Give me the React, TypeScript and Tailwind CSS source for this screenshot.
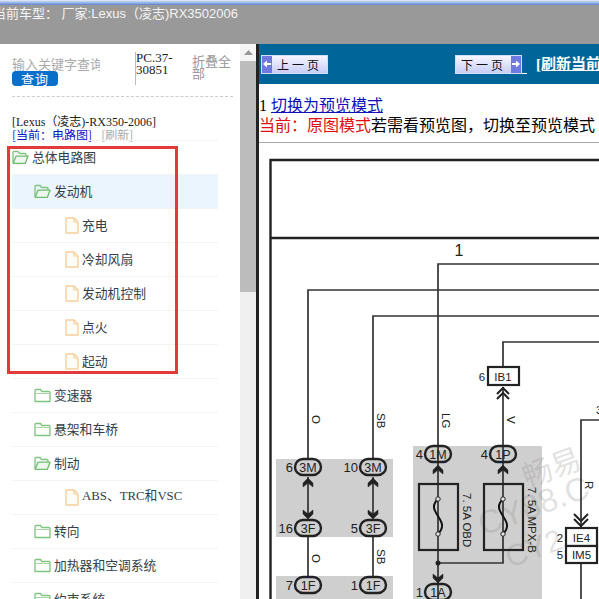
const cjk = "font-['Noto_Sans_CJK_SC',sans-serif]";

function FolderOpen() {
  return (
    <svg width="17" height="15" viewBox="0 0 17 15" fill="none" className="shrink-0">
      <path d="M1 13V2.5C1 1.8 1.4 1.5 2 1.5H6L7.5 3.5H13C13.6 3.5 14 3.9 14 4.5V6" stroke="#7fc47f" strokeWidth="1.3" />
      <path d="M1.2 13.3L4 6.2H16L13.4 13.3H1.2Z" stroke="#6fbb6f" strokeWidth="1.3" fill="#eef8ee" strokeLinejoin="round" />
    </svg>
  );
}
function FolderClosed() {
  return (
    <svg width="17" height="15" viewBox="0 0 17 15" fill="none" className="shrink-0">
      <path d="M1 13.5V2.5C1 1.8 1.4 1.5 2 1.5H6.5L8 3.5H15C15.6 3.5 16 3.9 16 4.5V13.5H1Z" stroke="#7fc47f" strokeWidth="1.3" strokeLinejoin="round" />
      <path d="M1 5.5H16" stroke="#a5d8a5" strokeWidth="1" />
    </svg>
  );
}
function Doc() {
  return (
    <svg width="14" height="17" viewBox="0 0 14 17" fill="none" className="shrink-0">
      <path d="M1 1H9L13 5V16H1V1Z" fill="#fffdf8" stroke="#f6cf9c" strokeWidth="1.4" strokeLinejoin="round" />
      <path d="M9 1V5H13" stroke="#f6cf9c" strokeWidth="1.2" />
    </svg>
  );
}

type Row = { label: string; kind: "open" | "closed" | "doc"; depth: number; active?: boolean };
const rows: Row[] = [
  { label: "总体电路图", kind: "open", depth: 0 },
  { label: "发动机", kind: "open", depth: 1, active: true },
  { label: "充电", kind: "doc", depth: 2 },
  { label: "冷却风扇", kind: "doc", depth: 2 },
  { label: "发动机控制", kind: "doc", depth: 2 },
  { label: "点火", kind: "doc", depth: 2 },
  { label: "起动", kind: "doc", depth: 2 },
  { label: "变速器", kind: "closed", depth: 1 },
  { label: "悬架和车桥", kind: "closed", depth: 1 },
  { label: "制动", kind: "open", depth: 1 },
  { label: "ABS、TRC和VSC", kind: "doc", depth: 2 },
  { label: "转向", kind: "closed", depth: 1 },
  { label: "加热器和空调系统", kind: "closed", depth: 1 },
  { label: "约束系统", kind: "closed", depth: 1 },
];

function TreeRow({ r }: { r: Row }) {
  const pad = r.depth === 0 ? "pl-0" : r.depth === 1 ? "pl-[22px]" : "pl-[53px]";
  return (
    <div className={`h-[34px] shrink-0 flex items-center gap-[3px] border-b border-[#f4f4f4] ${pad} ${r.active ? "bg-[#eaf5fd]" : ""}`}>
      {r.kind === "open" && <FolderOpen />}
      {r.kind === "closed" && <FolderClosed />}
      {r.kind === "doc" && <Doc />}
      <span className={`-mt-[2px] text-[12.8px] text-[#33404a] whitespace-nowrap ${r.label.startsWith("ABS") ? "font-['Liberation_Serif','Noto_Sans_CJK_SC',serif]" : cjk}`}>
        {r.label}
      </span>
    </div>
  );
}

const sans = "Liberation Sans";

function Connector({ x, y, a, b }: { x: number; y: number; a: string; b: string }) {
  return (
    <g>
      <rect x={x - 13} y={y - 8} width="26" height="16" rx="8" fill="none" stroke="#222" strokeWidth="2.4" />
      <text x={x} y={y + 4.5} textAnchor="middle" fontSize="12.5" fontFamily={sans} fill="#222">{b}</text>
      <text x={x - 15} y={y + 5} textAnchor="end" fontSize="13" fontFamily={sans} fill="#222">{a}</text>
    </g>
  );
}

function Fuse({ x, y, w, label, wx, ly }: { x: number; y: number; w: number; label: string; wx: number; ly: number }) {
  return (
    <g>
      <rect x={x} y={y} width={w} height="66" fill="none" stroke="#222" strokeWidth="2.2" />
      <path d={`M${wx} ${y + 15} C${wx - 14} ${y + 28} ${wx + 14} ${y + 36} ${wx} ${y + 50}`} fill="none" stroke="#111" strokeWidth="2" />
      <circle cx={wx} cy={y + 15} r="2.2" fill="#e6e6e6" stroke="#222" />
      <circle cx={wx} cy={y + 50} r="2.2" fill="#e6e6e6" stroke="#222" />
      <text transform={`translate(${x + w + 5} ${ly}) rotate(90)`} fontSize="11.5" fontFamily={sans} fill="#222">{label}</text>
    </g>
  );
}

function Arrow({ x, y, dir }: { x: number; y: number; dir: "up" | "down" }) {
  const s = dir === "up" ? -1 : 1;
  return <path d={`M${x - 5} ${y - 5 * s}L${x} ${y}L${x + 5} ${y - 5 * s}L${x + 5} ${y - 9 * s}L${x} ${y - 5 * s}L${x - 5} ${y - 9 * s}Z`} fill="#222" stroke="#222" strokeWidth="0.5" />;
}

function VText({ x, y, t }: { x: number; y: number; t: string }) {
  return <text transform={`translate(${x} ${y}) rotate(90)`} fontSize="11.5" fontFamily={sans} fill="#222">{t}</text>;
}

function Diagram() {
  const line = { stroke: "#333", strokeWidth: 1.7, fill: "none" };
  return (
    <svg width="340" height="456" viewBox="259 143 340 456" className="block shrink-0">
      <path d="M270.5 599V160H599" stroke="#222" strokeWidth="2.4" fill="none" />
      <path d="M270.5 238H599" stroke="#222" strokeWidth="2.4" fill="none" />
      <text x="459" y="256" textAnchor="middle" fontSize="16" fontFamily={sans} fill="#222">1</text>
      <rect x="276" y="459" width="117" height="78" fill="#cfcfcf" />
      <rect x="276" y="576" width="117" height="30" fill="#cfcfcf" />
      <rect x="413" y="446" width="129" height="160" fill="#cfcfcf" />
      <g fill="#8a8a8a" fillOpacity="0.25" fontFamily={sans}>
        <text transform="translate(527 488) rotate(-20)" fontSize="30" fontFamily="Noto Sans CJK SC">畅易</text>
        <text transform="translate(483 536) rotate(-20)" fontSize="33">CY88.C</text>
        <text transform="translate(510 568) rotate(-20)" fontSize="30">CY2</text>
      </g>
      <path d="M438 599V264H599" {...line} />
      <path d="M308 459V290H599" {...line} />
      <path d="M373 459V316H599" {...line} />
      <path d="M503 367V342H599" {...line} />
      <path d="M503 470V446" {...line} />
      <rect x="488" y="367" width="31" height="18" fill="#fff" stroke="#222" strokeWidth="2.2" />
      <text x="503" y="381" textAnchor="middle" fontSize="11.5" fontFamily={sans} fill="#222">IB1</text>
      <text x="482" y="381" textAnchor="middle" fontSize="11.5" fontFamily={sans} fill="#222">6</text>
      <path d="M503 387V446" {...line} />
      <path d="M497 394L503 388L509 394M497 399L503 393L509 399" stroke="#222" strokeWidth="2" fill="none" />
      <VText x={312} y={415} t="O" />
      <VText x={377} y={413} t="SB" />
      <VText x={442} y={413} t="LG" />
      <VText x={507} y={416} t="V" />
      <path d="M308 477V517M373 477V517M308 537V576M373 537V576" {...line} />
      <Arrow x={308} y={478} dir="up" /><Arrow x={308} y={519} dir="down" />
      <Arrow x={373} y={478} dir="up" /><Arrow x={373} y={519} dir="down" />
      <Connector x={308} y={467} a="6" b="3M" />
      <Connector x={373} y={467} a="10" b="3M" />
      <Connector x={308} y={528} a="16" b="3F" />
      <Connector x={373} y={528} a="5" b="3F" />
      <Connector x={308} y={585} a="7" b="1F" />
      <Connector x={373} y={585} a="1" b="1F" />
      <VText x={312} y={554} t="O" />
      <VText x={377} y={549} t="SB" />
      <path d="M503 470V563H438" {...line} />
      <circle cx="438" cy="563" r="2.5" fill="#222" />
      <Arrow x={438} y={465} dir="up" /><Arrow x={503} y={465} dir="up" />
      <Arrow x={438} y={583} dir="down" />
      <Connector x={438} y={454} a="4" b="1M" />
      <Connector x={503} y={454} a="4" b="1P" />
      <Fuse x={419} y={484} w={39} label="7. 5A OBD" wx={438} ly={493} />
      <Fuse x={484} y={484} w={39} label="7. 5A MPX-B" wx={503} ly={487} />
      <Connector x={438} y={592} a="1" b="1A" />
      <path d="M581 527V420H599M581 563V599" {...line} />
      <path d="M574 514L581 521L588 514M574 519L581 526L588 519" stroke="#222" strokeWidth="2" fill="none" />
      <VText x={585} y={481} t="R" />
      <rect x="566" y="528" width="31" height="18" fill="#fff" stroke="#222" strokeWidth="2.2" />
      <rect x="566" y="546" width="31" height="17" fill="#fff" stroke="#222" strokeWidth="2.2" />
      <text x="581.5" y="542" textAnchor="middle" fontSize="11.5" fontFamily={sans} fill="#222">IE4</text>
      <text x="581.5" y="559" textAnchor="middle" fontSize="11.5" fontFamily={sans} fill="#222">IM5</text>
      <text x="560" y="542" textAnchor="middle" fontSize="11.5" fontFamily={sans} fill="#222">2</text>
      <text x="560" y="559" textAnchor="middle" fontSize="11.5" fontFamily={sans} fill="#222">5</text>
      <text x="596" y="414" fontSize="11.5" fontFamily={sans} fill="#222">3</text>
    </svg>
  );
}

function PageBtn({ label, next }: { label: string; next?: boolean }) {
  const cap = (
    <span className="w-[10px] self-stretch bg-[#6f78e0] flex items-center justify-center">
      <svg width="8" height="8" viewBox="0 0 8 8">
        <path d={next ? "M0 3H4V0.5L8 4L4 7.5V5H0Z" : "M8 3H4V0.5L0 4L4 7.5V5H8Z"} fill="#fff" />
      </svg>
    </span>
  );
  return (
    <div className="h-[19px] w-[67px] shrink-0 flex border border-[#cfe0f5] bg-gradient-to-b from-[#f6f7ff] to-[#c9cdf6]">
      {!next && cap}
      <span className={`flex-1 text-center text-[12px] leading-[17px] tracking-[3px] text-[#111] whitespace-nowrap ${cjk}`}>{label}</span>
      {next && cap}
    </div>
  );
}

export default function App() {
  return (
    <div className="relative w-[599px] h-[599px] overflow-hidden bg-white flex flex-col">
      <div className="h-[5px] shrink-0 bg-gradient-to-b from-[#e6eefb] to-[#5f83d2]" />
      <div className="h-[39px] shrink-0 bg-[#999999] overflow-hidden">
        <div className="-ml-[7px] pt-[1px] text-[13px] leading-[16px] text-[#f4f4f4] whitespace-nowrap font-['Liberation_Sans','Noto_Sans_CJK_SC',sans-serif]">
          当前车型： 厂家:Lexus（凌志)RX3502006
        </div>
      </div>
      <div className="flex-1 flex min-h-0">
        <div className="w-[240px] shrink-0 overflow-hidden flex flex-col">
          <div className="h-[53px] ml-[12px] mr-[7px] flex items-start pt-[8px] border-b border-dashed border-[#cccccc] shrink-0">
            <div className="w-[123px] pt-[4px]">
              <div className={`w-[88px] overflow-hidden whitespace-nowrap text-[13px] leading-[15px] text-[#aaaaaa] ${cjk}`}>输入关键字查询</div>
              <div className={`w-[46px] h-[15px] rounded-[4px] bg-[#0a6fc8] text-white text-[13px] leading-[15px] text-center tracking-[1px] ${cjk}`}>查询</div>
            </div>
            <div className="w-[57px] h-[33px] border-l border-[#bbbbbb] text-[13px] leading-[12px] text-[#222] font-['Liberation_Serif',serif]">PC.37-<br />30851</div>
            <div className={`w-[40px] pt-[3px] text-[13px] leading-[12px] text-[#999999] ${cjk}`}>折叠全部</div>
          </div>
          <div className="ml-[12px] mt-[18px] h-[14px] text-[12px] leading-[14px] text-[#222] whitespace-nowrap font-['Liberation_Serif','Noto_Sans_CJK_SC',serif]">
            [Lexus（凌志)-RX350-2006]
          </div>
          <div className={`ml-[12px] h-[11px] text-[12px] leading-[12px] whitespace-nowrap flex gap-[9px] ${cjk}`}>
            <span className="text-[#1010c8]">[当前：电路图]</span>
            <span className="text-[#aaaaaa]">[刷新]</span>
          </div>
          <div className="ml-[12px] w-[206px] flex flex-col border-t border-[#f4f4f4] overflow-hidden">
            {rows.map((r) => <TreeRow key={r.label} r={r} />)}
          </div>
        </div>
        <div className="w-[16px] shrink-0 bg-[#f0f0f0] flex flex-col">
          <div className="h-[17px] bg-[#f4f4f4] flex items-center justify-center">
            <svg width="9" height="5" viewBox="0 0 9 5"><path d="M0 5L4.5 0L9 5Z" fill="#999" /></svg>
          </div>
          <div className="h-[231px] bg-[#bcbcbc]" />
        </div>
        <div className="w-[3px] shrink-0 bg-[#222]" />
        <div className="flex-1 min-w-0 overflow-hidden flex flex-col">
          <div className="h-[40px] shrink-0 bg-[#006699] flex items-center pl-[2px]">
            <PageBtn label="上一页" />
            <div className="w-[127px] shrink-0" />
            <PageBtn label="下一页" next />
            <div className="w-[5px] h-[1px] mt-[18px] bg-white shrink-0" />
            <span className="ml-[9px] shrink-0 text-[15px] font-bold underline text-white whitespace-nowrap font-['Liberation_Serif','Noto_Sans_CJK_SC',serif]">[刷新当前页]</span>
          </div>
          <div className="h-[59px] shrink-0 border-b border-[#aaaaaa] pt-[12px] whitespace-nowrap font-['Liberation_Serif','Noto_Sans_CJK_SC',serif] text-[16px] leading-[20px]">
            <div>1 <span className="text-[#1010b8] underline">切换为预览模式</span></div>
            <div><span className="text-[#e01010]">当前：原图模式</span>若需看预览图，切换至预览模式</div>
          </div>
          <Diagram />
        </div>
      </div>
      <div className="absolute left-[7px] top-[146px] w-[171px] h-[228px] border-[3px] border-[#e23a3a] pointer-events-none" />
    </div>
  );
}
